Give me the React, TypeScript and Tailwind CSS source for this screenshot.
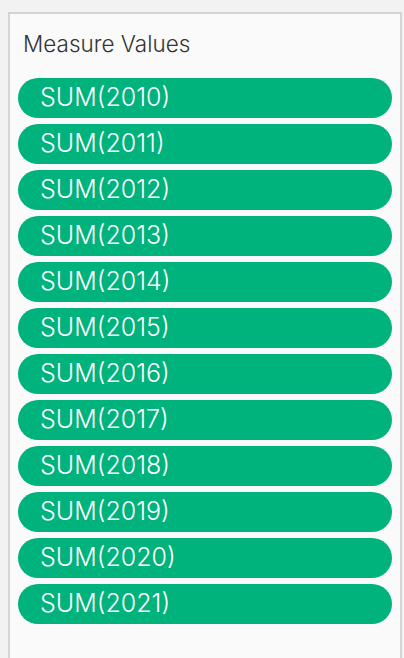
const years = [2010, 2011, 2012, 2013, 2014, 2015, 2016, 2017, 2018, 2019, 2020, 2021];

export default function App() {
  return (
    <div
      className="h-[658px] overflow-hidden bg-[#f2f2f2] pt-3 pl-2 pr-[2px]"
      style={{ fontFamily: "Inter, 'Noto Sans', sans-serif" }}
    >
      <div className="min-h-[700px] border-2 border-[#d4d4d4] bg-[#fafafa] px-2">
        {/* Header */}
        <div className="pt-4 pl-[5px] text-[22.5px] font-light leading-7 text-[#333333]">Measure Values</div>

        {/* Pills */}
        <div className="mt-5 flex flex-col gap-1.5">
          {years.map((y) => (
            <div
              key={y}
              className="flex h-10 items-center rounded-full bg-[#00b27b] pl-[22px] text-[25px] font-light text-white"
            >
              SUM({y})
            </div>
          ))}
        </div>
      </div>
    </div>
  );
}
